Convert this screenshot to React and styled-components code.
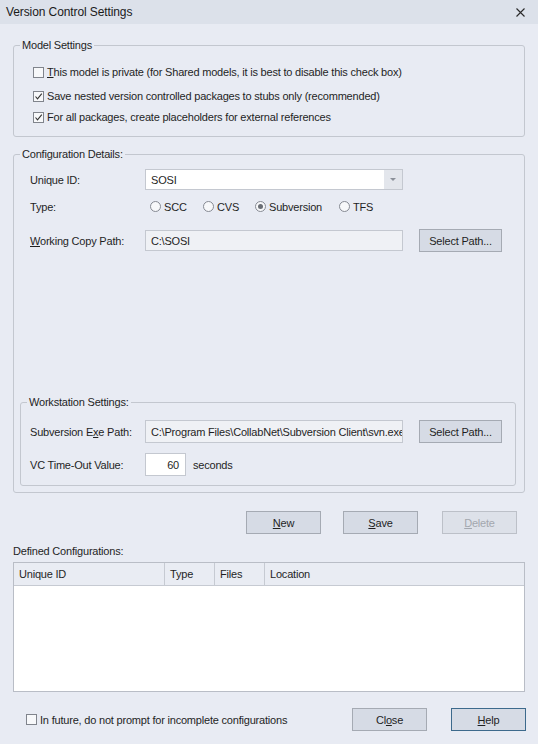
import React from 'react';
import styled, { createGlobalStyle } from 'styled-components';

const Global = createGlobalStyle`
	html, body {
		margin: 0;
		padding: 0;
		background: #e8ebf3;
	}
	* { box-sizing: border-box; }
`;

const Dialog = styled.div`
	display: flex;
	flex-direction: column;
	width: 538px;
	height: 744px;
	background: #e8ebf3;
	font-family: "Liberation Sans", Arial, sans-serif;
	font-size: 11px;
	letter-spacing: -0.2px;
	color: #1f1f1f;
	overflow: hidden;
`;

const TitleBar = styled.div`
	display: flex;
	align-items: center;
	justify-content: space-between;
	height: 24px;
	padding: 0 13px 0 6px;
	background: #dce1ea;
	font-size: 12px;
	letter-spacing: -0.1px;
	color: #1a1a1a;
`;

const Body = styled.div`
	display: flex;
	flex-direction: column;
	padding: 14px 13px 0 13px;
`;

const Group = styled.fieldset`
	display: block;
	margin: ${p => p.$mt || 0}px ${p => p.$mr || 0}px 0 ${p => p.$ml || 0}px;
	padding: ${p => p.$pt}px 0 ${p => p.$pb}px 0;
	border: 1px solid #c3c7cf;
	border-radius: 3px;
	min-width: 0;
`;

const GroupBody = styled.div`
	display: flex;
	flex-direction: column;
	padding-left: ${p => p.$pl}px;
`;

const Legend = styled.legend`
	height: 14px;
	line-height: 14px;
	padding: 0 2px;
	margin-left: 6px;
	font-size: 11px;
	color: #1f1f1f;
`;

const CheckRow = styled.label`
	display: flex;
	align-items: center;
	height: 20px;
	margin-top: ${p => p.$mt || 0}px;
	white-space: nowrap;
`;

const Box = styled.span`
	display: inline-block;
	width: 11px;
	height: 11px;
	margin-right: 3px;
	border: 1px solid #80848c;
	background: #f7f8fa;
	flex: none;
`;

const Check = () => (
	<svg width="9" height="9" viewBox="0 0 9 9" style={{ display: 'block' }}>
		<path d="M1.5 4.5 L3.5 6.8 L7.8 1.6" fill="none" stroke="#333" strokeWidth="1.1" />
	</svg>
);

const CloseIcon = () => (
	<svg width="9" height="9" viewBox="0 0 9 9" style={{ display: 'block' }}>
		<path d="M0.5 0.5 L8.5 8.5 M8.5 0.5 L0.5 8.5" stroke="#2a2a2a" strokeWidth="1.1" />
	</svg>
);

const U = styled.span`
	text-decoration: underline;
	text-underline-offset: 1px;
`;

const FormRow = styled.div`
	display: flex;
	align-items: center;
	height: ${p => p.$h || 21}px;
	margin-top: ${p => p.$mt || 0}px;
	padding-left: ${p => p.$pl || 0}px;
`;

const Label = styled.span`
	width: 115px;
	flex: none;
	white-space: nowrap;
`;

const Field = styled.div`
	display: flex;
	align-items: center;
	width: ${p => p.$w || 258}px;
	height: ${p => p.$h || 21}px;
	padding: 0 ${p => p.$right ? 6 : 5}px;
	justify-content: ${p => p.$right ? 'flex-end' : 'flex-start'};
	border: 1px solid #c4c8d0;
	background: ${p => p.$ro ? '#eff1f5' : '#ffffff'};
	white-space: nowrap;
	overflow: hidden;
	flex: none;
`;

const Combo = styled(Field)`
	padding-right: 0;
	justify-content: space-between;
`;

const ComboArrow = styled.span`
	display: flex;
	align-items: center;
	justify-content: center;
	width: 18px;
	height: 100%;
	background: #e3e6ec;
	&::after {
		content: '';
		border-left: 3px solid transparent;
		border-right: 3px solid transparent;
		border-top: 3px solid #8b9099;
	}
`;

const Radios = styled.div`
	display: flex;
	align-items: center;
	margin-left: 5px;
`;

const Radio = styled.span`
	display: flex;
	align-items: center;
	width: ${p => p.$w ? p.$w + 'px' : 'auto'};
	white-space: nowrap;
`;

const Circle = styled.span`
	display: inline-flex;
	align-items: center;
	justify-content: center;
	width: 11px;
	height: 11px;
	margin-right: 3px;
	border: 1px solid #868a93;
	border-radius: 50%;
	background: #f7f8fa;
	&::after {
		content: '';
		display: ${p => p.$on ? 'block' : 'none'};
		width: 5px;
		height: 5px;
		border-radius: 50%;
		background: #6a6e75;
	}
`;

const Button = styled.button`
	display: flex;
	align-items: center;
	justify-content: center;
	width: ${p => p.$w || 75}px;
	height: 23px;
	margin-left: ${p => p.$ml || 0}px;
	margin-right: ${p => p.$mr || 0}px;
	padding: 0;
	background: ${p => p.disabled ? '#dde1e9' : '#d6dbe5'};
	border: 1px solid ${p => p.$focus ? '#3d6a8c' : p.disabled ? '#bcc0c8' : '#a5aab3'};
	font-family: "Liberation Sans", Arial, sans-serif;
	font-size: 11px;
	letter-spacing: -0.2px;
	color: ${p => p.disabled ? '#a3a7ae' : '#1f1f1f'};
	flex: none;
`;

const Spacer = styled.div`
	flex: 1;
`;

const Unit = styled.span`
	margin-left: 7px;
`;

const ActionRow = styled.div`
	display: flex;
	justify-content: flex-end;
	margin-top: 18px;
	padding-right: 8px;
`;

const Caption = styled.div`
	height: 14px;
	line-height: 14px;
	margin-top: 10px;
`;

const Table = styled.div`
	display: flex;
	flex-direction: column;
	height: 130px;
	margin-top: 4px;
	border: 1px solid #b9bdc6;
	background: #ffffff;
`;

const HeadRow = styled.div`
	display: flex;
	height: 23px;
	background: #e9ecf3;
	border-bottom: 1px solid #c6cad2;
`;

const HeadCell = styled.div`
	display: flex;
	align-items: center;
	width: ${p => p.$w ? p.$w + 'px' : 'auto'};
	flex: ${p => p.$w ? 'none' : 1};
	padding-left: 5px;
	border-right: ${p => p.$w ? '1px solid #c6cad2' : 'none'};
`;

const Footer = styled.div`
	display: flex;
	align-items: center;
	margin-top: 16px;
	padding-left: 26px;
`;

export default function App() {
	return (
		<Dialog>
			<Global />
			<TitleBar>
				<span>Version Control Settings</span>
				<CloseIcon />
			</TitleBar>
			<Body>
				<Group $pt={10} $pb={9}>
					<Legend>Model Settings</Legend>
					<GroupBody $pl={19}>
						<CheckRow>
							<Box />
							<span><U>T</U>his model is private (for Shared models, it is best to disable this check box)</span>
						</CheckRow>
						<CheckRow $mt={4}>
							<Box><Check /></Box>
							<span>Save nested version controlled packages to stubs only (recommended)</span>
						</CheckRow>
						<CheckRow $mt={1}>
							<Box><Check /></Box>
							<span>For all packages, create placeholders for external references</span>
						</CheckRow>
					</GroupBody>
				</Group>

				<Group $mt={10} $pt={8} $pb={6}>
					<Legend>Configuration Details:</Legend>
					<GroupBody $pl={0}>
						<FormRow $pl={16}>
							<Label>Unique ID:</Label>
							<Combo>
								<span>SOSI</span>
								<ComboArrow />
							</Combo>
						</FormRow>
						<FormRow $mt={6} $pl={16}>
							<Label>Type:</Label>
							<Radios>
								<Radio $w={53}><Circle />SCC</Radio>
								<Radio $w={52}><Circle />CVS</Radio>
								<Radio $w={84}><Circle $on />Subversion</Radio>
								<Radio><Circle />TFS</Radio>
							</Radios>
						</FormRow>
						<FormRow $h={23} $mt={12} $pl={16}>
							<Label><U>W</U>orking Copy Path:</Label>
							<Field $ro>C:\SOSI</Field>
							<Button $w={83} $ml={16}>Select Path...</Button>
						</FormRow>
						<Group $mt={143} $ml={6} $mr={8} $pt={11} $pb={9}>
							<Legend>Workstation Settings:</Legend>
							<GroupBody $pl={9}>
								<FormRow $h={23}>
									<Label>Subversion E<U>x</U>e Path:</Label>
									<Field $ro $h={23}>C:\Program Files\CollabNet\Subversion Client\svn.exe</Field>
									<Button $w={83} $ml={16}>Select Path...</Button>
								</FormRow>
								<FormRow $h={23} $mt={10}>
									<Label>VC Time-Out Value:</Label>
									<Field $w={41} $h={23} $right>60</Field>
									<Unit>seconds</Unit>
								</FormRow>
							</GroupBody>
						</Group>
					</GroupBody>
				</Group>

				<ActionRow>
					<Button><U>N</U>ew</Button>
					<Button $ml={22}><U>S</U>ave</Button>
					<Button $ml={24} disabled><U>D</U>elete</Button>
				</ActionRow>

				<Caption>Defined Configurations:</Caption>
				<Table>
					<HeadRow>
						<HeadCell $w={151}>Unique ID</HeadCell>
						<HeadCell $w={50}>Type</HeadCell>
						<HeadCell $w={50}>Files</HeadCell>
						<HeadCell>Location</HeadCell>
					</HeadRow>
				</Table>
			</Body>

			<Footer>
				<CheckRow>
					<Box />
					<span>In future, do not prompt for incomplete configurations</span>
				</CheckRow>
				<Spacer />
				<Button>Cl<U>o</U>se</Button>
				<Button $ml={24} $mr={12} $focus><U>H</U>elp</Button>
			</Footer>
		</Dialog>
	);
}
